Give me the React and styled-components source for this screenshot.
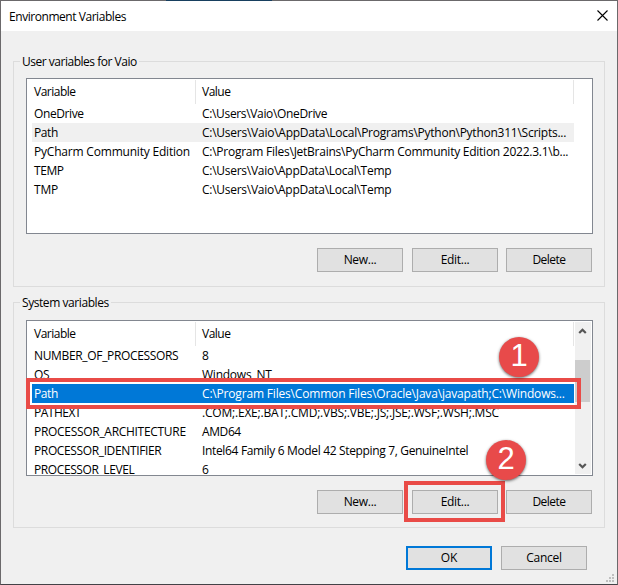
import styled, { createGlobalStyle } from "styled-components";

// ls = letter spacing in px, keeps every text at its dialog font width
const userVariables = [
    { name: "OneDrive", nameLs: -0.4, value: "C:\\Users\\Vaio\\OneDrive", valueLs: -0.34 },
    { name: "Path", nameLs: -0.4, value: "C:\\Users\\Vaio\\AppData\\Local\\Programs\\Python\\Python311\\Scripts...", valueLs: -0.25, state: "inactive" },
    { name: "PyCharm Community Edition", nameLs: -0.2, value: "C:\\Program Files\\JetBrains\\PyCharm Community Edition 2022.3.1\\b...", valueLs: -0.25 },
    { name: "TEMP", nameLs: -0.4, value: "C:\\Users\\Vaio\\AppData\\Local\\Temp", valueLs: -0.27 },
    { name: "TMP", nameLs: -0.2, value: "C:\\Users\\Vaio\\AppData\\Local\\Temp", valueLs: -0.27 },
];

const systemVariables = [
    { name: "NUMBER_OF_PROCESSORS", nameLs: -0.34, value: "8", valueLs: 0 },
    { name: "OS", nameLs: -0.3, value: "Windows_NT", valueLs: -0.24 },
    { name: "Path", nameLs: -0.4, value: "C:\\Program Files\\Common Files\\Oracle\\Java\\javapath;C:\\Windows...", valueLs: -0.18, state: "active" },
    { name: "PATHEXT", nameLs: -0.5, value: ".COM;.EXE;.BAT;.CMD;.VBS;.VBE;.JS;.JSE;.WSF;.WSH;.MSC", valueLs: -0.205 },
    { name: "PROCESSOR_ARCHITECTURE", nameLs: -0.3, value: "AMD64", valueLs: -0.4 },
    { name: "PROCESSOR_IDENTIFIER", nameLs: -0.37, value: "Intel64 Family 6 Model 42 Stepping 7, GenuineIntel", valueLs: -0.34 },
    { name: "PROCESSOR_LEVEL", nameLs: -0.4, value: "6", valueLs: 0 },
];

function VariableTable({ rows, scroll }) {
    return (
        <ListBox>
            <ListHeader>
                <HeaderCell $width={164}><Label $ls={-0.5}>Variable</Label></HeaderCell>
                <HeaderCell $width={378}><Label $ls={-0.5}>Value</Label></HeaderCell>
            </ListHeader>
            <Rows>
                {rows.map((row) => (
                    <Row key={row.name} $state={row.state}>
                        <NameCell><Label $ls={row.nameLs}>{row.name}</Label></NameCell>
                        <Label $ls={row.valueLs}>{row.value}</Label>
                    </Row>
                ))}
            </Rows>
            {scroll && (
                <ScrollBar>
                    <Arrow />
                    <Thumb />
                    <Arrow $down />
                </ScrollBar>
            )}
        </ListBox>
    );
}

function Arrow({ $down }) {
    return (
        <ArrowIcon viewBox="0 0 9 6" $down={$down}>
            <path d="M1.2 5 L4.5 1.7 L7.8 5" fill="none" stroke="#555" strokeWidth="2.2" />
        </ArrowIcon>
    );
}

function VariableButtons({ marked }) {
    return (
        <ButtonRow>
            <Button><Label $ls={-0.3}>New...</Label></Button>
            <EditSlot>
                {marked && <EditMark />}
                <Button><Label $ls={-0.3}>Edit...</Label></Button>
                {marked && <StepTwo>2</StepTwo>}
            </EditSlot>
            <Button><Label $ls={-0.5}>Delete</Label></Button>
        </ButtonRow>
    );
}

export default function App() {
    return (
        <>
            <GlobalStyle />
            <Dialog>
                <TitleBar>
                    <Label $ls={-0.45}>Environment Variables</Label>
                    <CloseIcon viewBox="0 0 11 11">
                        <path d="M0.5 0.5 L10.5 10.5 M10.5 0.5 L0.5 10.5" stroke="#000" strokeWidth="1.1" />
                    </CloseIcon>
                </TitleBar>
                <Content>
                    <Group>
                        <Legend><Label $ls={-0.48}>User variables for Vaio</Label></Legend>
                        <VariableTable rows={userVariables} />
                        <VariableButtons />
                    </Group>
                    <Group>
                        <Legend $gap={8}><Label $ls={-0.43}>System variables</Label></Legend>
                        <TableSlot>
                            <VariableTable rows={systemVariables} scroll />
                            <RowMark />
                            <StepOne>1</StepOne>
                        </TableSlot>
                        <VariableButtons marked />
                    </Group>
                </Content>
                <Footer>
                    <Button $primary>OK</Button>
                    <Button><Label $ls={-0.25}>Cancel</Label></Button>
                </Footer>
                <Grip viewBox="0 0 8 8">
                    <path d="M6 0h2v2h-2z M3 3h2v2h-2z M6 3h2v2h-2z M0 6h2v2h-2z M3 6h2v2h-2z M6 6h2v2h-2z" fill="#bfbfbf" />
                </Grip>
            </Dialog>
        </>
    );
}

const GlobalStyle = createGlobalStyle`
    body {
        margin: 0;
        overflow: hidden;
    }

    * {
        box-sizing: border-box;
    }
`;

const Dialog = styled.div`
    position: relative;
    display: flex;
    flex-direction: column;
    width: 618px;
    height: 585px;
    border: 1px solid #6b696b;
    border-bottom-color: #444247;
    background: #f0f0f0;
    color: #000;
    font-family: "Open Sans", "Segoe UI", sans-serif;
    font-size: 12px;
    line-height: 19px;

    /* strip of the window behind, seen above the title bar */
    &::before {
        content: "";
        position: absolute;
        top: -1px;
        left: 165px;
        width: 106px;
        height: 1px;
        background: #173f5f;
    }
`;

const Label = styled.span`
    white-space: nowrap;
    letter-spacing: ${(props) => props.$ls}px;
`;

const TitleBar = styled.div`
    display: flex;
    align-items: center;
    justify-content: space-between;
    height: 30px;
    padding: 0 9px 0 8px;
    background: #fff;
`;

const CloseIcon = styled.svg`
    width: 11px;
    height: 11px;
    margin-top: -2px;
`;

const Content = styled.div`
    display: flex;
    flex-direction: column;
    gap: 15px;
    padding: 30px 12px 0;
`;

const Group = styled.div`
    display: flex;
    flex-direction: column;
    height: 226px;
    padding: 0 11px 0 12px;
    border: 1px solid #dcdcdc;
`;

const Legend = styled.div`
    align-self: flex-start;
    height: 19px;
    margin: -10px 0 ${(props) => props.$gap ?? 7}px -6px;
    padding: 0 2px;
    background: #f0f0f0;
`;

const TableSlot = styled.div`
    position: relative;
`;

const ListBox = styled.div`
    display: grid;
    grid-template: 24px 1fr / 1fr 17px;
    width: 567px;
    height: 156px;
    padding: 1px 0 0;
    border: 1px solid #828790;
    background: #fff;
    overflow: hidden;
`;

const ListHeader = styled.div`
    display: flex;
    padding-left: 5px;
`;

const HeaderCell = styled.div`
    display: flex;
    align-items: center;
    width: ${(props) => props.$width}px;
    padding: 0 0 1px ${(props) => (props.$width > 200 ? 6 : 2)}px;
    border-right: 1px solid #e5e5e5;
`;

const Rows = styled.div`
    grid-row: 2;
    grid-column: 1;
    min-height: 0;
    padding-left: 5px;
`;

const rowColors = {
    inactive: "background: #f0f0f0;",
    active: "background: #0078d7; color: #fff;",
};

const Row = styled.div`
    display: flex;
    width: 542px;
    height: 19px;
    padding-left: 2px;
    ${(props) => rowColors[props.$state]}
`;

const NameCell = styled.div`
    flex: 0 0 168px;
`;

const ScrollBar = styled.div`
    grid-row: 1 / 3;
    grid-column: 2;
    display: flex;
    flex-direction: column;
    align-items: center;
    width: 16px;
    height: 152px;
    padding: 6px 0 5px;
    background: #f0f0f0;
`;

const ArrowIcon = styled.svg`
    width: 9px;
    height: 6px;
    margin-right: 1px;
    transform: ${(props) => (props.$down ? "rotate(180deg)" : "none")};
`;

const Thumb = styled.div`
    width: 15px;
    height: 42px;
    margin: 26px 1px auto 0;
    background: #cdcdcd;
`;

const ButtonRow = styled.div`
    display: flex;
    justify-content: flex-end;
    gap: 8px;
    margin-top: 14px;
    padding-right: 1px;
`;

const Button = styled.button`
    width: 86px;
    height: 24px;
    padding: 0 0 1px;
    border: ${(props) => (props.$primary ? "2px solid #0078d7" : "1px solid #adadad")};
    background: #e1e1e1;
    color: #000;
    font: inherit;
    line-height: 18px;
`;

const EditSlot = styled.div`
    position: relative;
    margin-left: 1px;
`;

const Footer = styled.div`
    display: flex;
    justify-content: flex-end;
    gap: 9px;
    padding: 18px 30px 0 0;
`;

const Grip = styled.svg`
    position: absolute;
    right: 3px;
    bottom: 2px;
    width: 8px;
    height: 8px;
`;

// red frames and numbered badges over the dialog
const Mark = styled.div`
    position: absolute;
    border: 4px solid #e94b47;
    pointer-events: none;
`;

const RowMark = styled(Mark)`
    top: 58px;
    left: 0;
    width: 555px;
    height: 31px;
`;

const EditMark = styled(Mark)`
    top: -9px;
    left: -8px;
    width: 101px;
    height: 41px;
`;

const Badge = styled.div`
    position: absolute;
    width: 40px;
    height: 40px;
    border-radius: 50%;
    background: #e84a4a;
    box-shadow: 0 1px 3px rgba(0, 0, 0, 0.6);
    color: #fff;
    font-family: "Liberation Sans", Arial, sans-serif;
    font-size: 31px;
    line-height: 38px;
    text-align: center;
`;

const StepOne = styled(Badge)`
    top: 17px;
    left: 473px;
`;

const StepTwo = styled(Badge)`
    top: -50px;
    left: 74px;
`;
